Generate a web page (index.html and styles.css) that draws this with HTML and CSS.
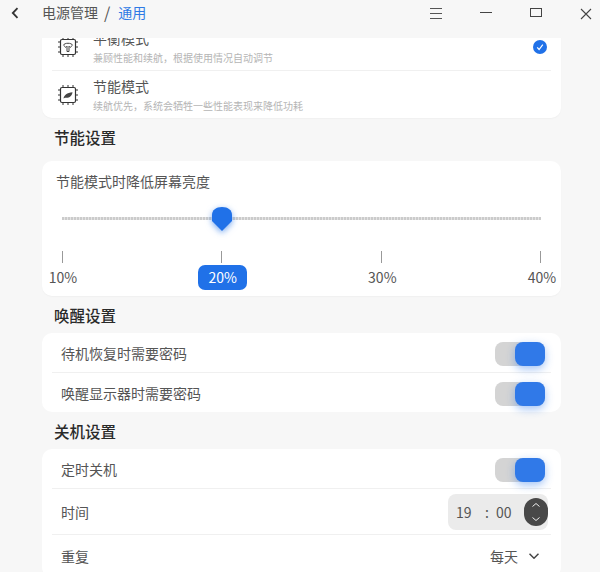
FILE: index.html
```html
<!DOCTYPE html>
<html lang="zh">
<head>
<meta charset="utf-8">
<title>电源管理</title>
<link rel="stylesheet" href="styles.css">
</head>
<body>
<div class="app">
  <header class="titlebar">
    <svg class="back" width="10" height="14" viewBox="0 0 10 14"><path d="M7.500 2.200 2.800 7l4.700 4.800" fill="none" stroke="#333" stroke-width="1.800"/></svg>
    <div class="crumbs"><span>电源管理</span><span class="slash">/</span><span class="current">通用</span></div>
    <div class="winbtns">
      <svg width="12" height="12" viewBox="0 0 12 12"><path d="M0 .5h12M0 5.500h12M0 10.500h12" stroke="#555" stroke-width="1" fill="none"/></svg>
      <svg width="12" height="12" viewBox="0 0 12 12"><path d="M0 4.500h12" stroke="#444" stroke-width="1" fill="none"/></svg>
      <svg width="12" height="10" viewBox="0 0 12 10"><rect x=".5" y=".5" width="11" height="8" stroke="#444" fill="none"/></svg>
      <svg width="12" height="12" viewBox="0 0 12 12"><path d="M1 1l10 10M11 1 1 11" stroke="#444" stroke-width="1.100" fill="none"/></svg>
    </div>
  </header>
  <main class="content">
    <section class="card modes">
      <div class="mode">
        <svg class="chip" width="20" height="20" viewBox="0 0 20 20"><g fill="none" stroke="#333"><rect x="2.500" y="2.500" width="15" height="15" rx="1.500" stroke-width="1.200"/><path d="M5 0v2M10 0v2M15 0v2M5 18v2M10 18v2M15 18v2M0 5h2M0 10h2M0 15h2M18 5h2M18 10h2M18 15h2"/></g><path d="M5.500 8.200c.8-2.600 8.200-2.600 9 0l-2.300 2.200-1.200-1.200v5.300H9V9.200l-1.200 1.200z" fill="none" stroke="#444" stroke-width="1"/></svg>
        <div class="mode-text"><div class="mode-title">平衡模式</div><div class="mode-sub">兼顾性能和续航，根据使用情况自动调节</div></div>
        <svg class="check" width="14" height="14" viewBox="0 0 14 14"><circle cx="7" cy="7" r="7" fill="#2071e8"/><path d="M4.200 7.300 6.100 9.500 9.800 4.700" fill="none" stroke="#fff" stroke-width="1.200"/></svg>
      </div>
      <div class="mode">
        <svg class="chip" width="20" height="20" viewBox="0 0 20 20"><g fill="none" stroke="#333"><rect x="2.500" y="2.500" width="15" height="15" rx="1.500" stroke-width="1.200"/><path d="M5 0v2M10 0v2M15 0v2M5 18v2M10 18v2M15 18v2M0 5h2M0 10h2M0 15h2M18 5h2M18 10h2M18 15h2"/></g><path d="M5.500 13.500c.5-3.500 3.500-5.800 9-6.300-.5 3.800-3 6-7.500 5.500z" fill="#444"/></svg>
        <div class="mode-text"><div class="mode-title">节能模式</div><div class="mode-sub">续航优先，系统会牺牲一些性能表现来降低功耗</div></div>
      </div>
    </section>

    <h2 class="heading first">节能设置</h2>
    <section class="card slider-card">
      <div class="slider-label">节能模式时降低屏幕亮度</div>
      <div class="track">
        <svg class="thumb" width="26" height="32" viewBox="0 0 26 32"><path d="M3 11C3 6 7 3 13 3s10 3 10 8v6L13 27 3 17z" fill="#2071e8"/></svg>
      </div>
      <div class="marks">
        <div class="mark"><i class="tick"></i><span class="mark-text">10%</span></div>
        <div class="mark"><i class="tick"></i><span class="mark-text active">20%</span></div>
        <div class="mark"><i class="tick"></i><span class="mark-text">30%</span></div>
        <div class="mark"><i class="tick"></i><span class="mark-text">40%</span></div>
      </div>
    </section>

    <h2 class="heading tight">唤醒设置</h2>
    <section class="card">
      <div class="row h40"><span>待机恢复时需要密码</span><div class="toggle"><i class="knob"></i></div></div>
      <div class="row h39"><span>唤醒显示器时需要密码</span><div class="toggle"><i class="knob"></i></div></div>
    </section>

    <h2 class="heading tight">关机设置</h2>
    <section class="card">
      <div class="row h40"><span>定时关机</span><div class="toggle"><i class="knob"></i></div></div>
      <div class="row h46">
        <span>时间</span>
        <div class="time">
          <span class="hh">19</span><span class="colon">:</span><span class="mm">00</span>
          <div class="spin">
            <svg width="10" height="6" viewBox="0 0 10 6"><path d="M1.500 4.500 5 1.500l3.500 3" fill="none" stroke="#eee" stroke-width="1"/></svg>
            <svg width="10" height="6" viewBox="0 0 10 6"><path d="M1.500 1.500 5 4.500l3.500-3" fill="none" stroke="#eee" stroke-width="1"/></svg>
          </div>
        </div>
      </div>
      <div class="row h42">
        <span>重复</span>
        <div class="select"><span>每天</span><svg width="10" height="6" viewBox="0 0 10 6"><path d="M.5.800 5 5.200 9.500.8" fill="none" stroke="#444" stroke-width="1.500"/></svg></div>
      </div>
    </section>
  </main>
</div>
</body>
</html>
```
FILE: styles.css
```css
* { box-sizing: border-box; }
html, body { margin: 0; height: 100%; }
body {
  background: #f7f7f7;
  font-family: "Noto Sans CJK SC", "Noto Sans", sans-serif;
  font-size: 14px;
  color: #555;
}
.app { width: 600px; height: 572px; display: flex; flex-direction: column; overflow: hidden; }

.titlebar { height: 38px; flex: none; display: flex; align-items: flex-start; position: relative; z-index: 1; background: #f7f7f7; }
.back { margin: 6px 0 0 10px; }
.crumbs { margin-left: 22px; height: 25px; display: flex; align-items: center; gap: 5px; line-height: 25px; color: #555; }
.slash { font-size: 16px; margin-right: 3px; margin-left: 1px; }
.current { color: #2f7ae5; }
.winbtns { margin-left: auto; display: flex; gap: 38px; padding: 8px 8px 0 0; align-items: flex-start; }

.content { flex: 1; min-height: 0; padding: 0 39px 0 42px; overflow: hidden; }
.card { background: #fff; border-radius: 10px; }
.modes { margin-top: -15px; height: 95px; padding: 0 10px; box-shadow: 0 1px 1px #f0f0f0; }
.mode { height: 48px; display: flex; align-items: center; padding: 0 4px 0 6px; border-bottom: 1px solid #f0f0f0; }
.mode:last-child { border-bottom: 0; height: 47px; }
.chip { flex: none; }
.mode-text { margin-left: 15px; flex: 1; }
.mode-title { line-height: 20px; color: #555; }
.mode-sub { font-size: 10px; line-height: 14px; margin-top: 3px; color: #b5b5b5; }
.check { flex: none; }

.heading { margin: 0; padding-left: 12px; font-size: 15.500px; font-weight: 500; color: #2a2a2a; height: 43px; line-height: 38px; }
.heading.tight { height: 37px; }

.slider-card { height: 135px; box-shadow: 0 1px 1px #f0f0f0; }
.slider-label { padding: 10px 0 0 14px; line-height: 20px; }
.track { position: relative; height: 3px; margin: 26px 20px 0 20px; background: repeating-linear-gradient(90deg, #cbcbcb 0 2px, #e4e4e4 2px 3px); }
.thumb { position: absolute; left: 147px; top: -13px; filter: drop-shadow(0 2px 3px rgba(32,113,232,.6)); }
.marks { display: flex; justify-content: space-between; margin-top: 31px; }
.mark { width: 40px; display: flex; flex-direction: column; align-items: center; }
.tick { width: 1px; height: 12px; background: #999; }
.mark-text { margin: 2px 0 0 2px; height: 25px; line-height: 25px; white-space: nowrap; color: #555; }
.mark-text.active { width: 49px; flex: none; text-align: center; background: #2071e8; color: #fff; border-radius: 7px; }

.row { margin: 0 10px; padding: 0 6px 0 9px; display: flex; align-items: center; justify-content: space-between; border-bottom: 1px solid #f0f0f0; }
.row:last-child { border-bottom: 0; }
.h39 { height: 39px; }
.h40 { height: 40px; }
.h46 { height: 46px; padding-right: 3px; }
.h42 { height: 42px; padding-right: 12px; }

.toggle { width: 50px; height: 24px; margin-top: 2px; background: #d4d4d4; border-radius: 8px; position: relative; }
.knob { position: absolute; right: 0; top: 0; width: 30px; height: 24px; background: #3079e8; border-radius: 8px; box-shadow: 0 3px 8px rgba(48,121,232,.45); }

.time { width: 100px; height: 36px; background: #ebebeb; border-radius: 8px; display: flex; align-items: center; padding: 0 0 0 8px; position: relative; color: #555; }
.hh { width: 29px; }
.colon { width: 11px; }
.mm { width: 27px; }
.spin { position: absolute; right: 0; top: 4px; width: 24px; height: 28px; border-radius: 12px; background: #484848; display: flex; flex-direction: column; align-items: center; justify-content: center; gap: 8px; }

.select { display: flex; align-items: center; gap: 11px; }
```
